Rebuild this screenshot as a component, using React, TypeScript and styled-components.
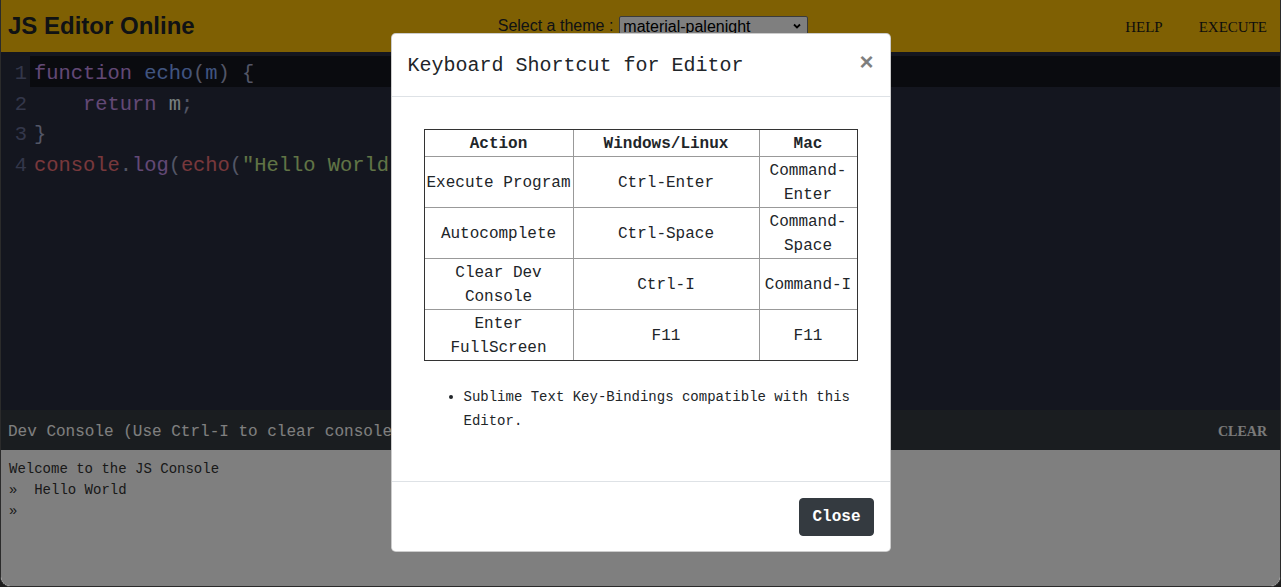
import styled, { createGlobalStyle } from 'styled-components';

const GlobalStyle = createGlobalStyle`
  html, body { margin: 0; padding: 0; background: #1d1d1d; }
  body { font-family: "Liberation Sans", Arial, sans-serif; }
  * { box-sizing: border-box; }
`;

const mono = `"Liberation Mono", "Courier New", monospace`;
const serif = `"Liberation Serif", "Times New Roman", serif`;

const Frame = styled.div`
  position: relative;
  height: 587px;
  display: flex;
  flex-direction: column;
  overflow: hidden;
  border: 1px solid #2b2b2b;
  border-top: none;
  border-radius: 0 0 10px 10px;
  background: #fff;
`;

/* top bar */
const Header = styled.header`
  height: 52px;
  flex: none;
  display: flex;
  align-items: center;
  padding: 0 13px 0 7px;
  background: #ffc107;
`;

const Brand = styled.h1`
  margin: 0;
  font: bold 24px "Liberation Sans", Arial, sans-serif;
  color: #212529;
`;

const ThemePicker = styled.label`
  margin-left: 303px;
  display: flex;
  align-items: center;
  gap: 6px;
  font-size: 16px;
  color: #212529;
`;

const SelectBox = styled.span`
  width: 189px;
  height: 20px;
  display: flex;
  align-items: center;
  padding: 0 6px 0 3px;
  background: #fff;
  border: 1px solid #767676;
  border-radius: 2px;
`;

const Select = styled.select`
  flex: 1;
  appearance: none;
  border: none;
  background: transparent;
  padding: 1px 0 0;
  height: 18px;
  font: 16px "Liberation Sans", Arial, sans-serif;
  color: #000;
  outline: none;
`;

const NavLinks = styled.nav`
  margin-left: auto;
  display: flex;
  gap: 36px;
  padding-top: 2px;
`;

const NavLink = styled.button`
  background: none;
  border: none;
  padding: 0;
  font: 15px ${serif};
  color: #1a1a1a;
`;

/* editor */
const Editor = styled.div`
  height: 358px;
  flex: none;
  padding-top: 4px;
  background: #292d3e;
  font: 20.4px ${mono};
  line-height: 30.6px;
`;

const CodeRow = styled.div`
  display: flex;
  height: 30.6px;
`;

const LineNo = styled.span`
  width: 29px;
  flex: none;
  padding: 3px 3px 0 0;
  text-align: right;
  color: #676e95;
`;

const LineText = styled.span<{ $active?: boolean }>`
  flex: 1;
  padding: 3px 0 0 4px;
  white-space: pre;
  color: #a6accd;
  background: ${(p) => (p.$active ? 'rgba(0, 0, 0, 0.5)' : 'transparent')};
`;

const Tok = styled.span<{ $c: string }>`
  color: ${(p) => p.$c};
`;

/* console */
const DevBar = styled.div`
  height: 40px;
  flex: none;
  display: flex;
  align-items: center;
  justify-content: space-between;
  padding: 4px 13px 0 7px;
  background: #343a40;
  color: #fff;
  font: 16px ${mono};
`;

const ClearButton = styled.button`
  background: none;
  border: none;
  padding: 0;
  font: bold 14px ${serif};
  color: #f2f2f2;
`;

const Console = styled.div`
  flex: 1;
  padding: 9px 8px;
  background: #fff;
  color: #333;
  font: 14px ${mono};
  line-height: 21px;
  white-space: pre;
`;

/* modal */
const Backdrop = styled.div`
  position: absolute;
  inset: 0;
  background: rgba(0, 0, 0, 0.5);
`;

const ModalLayer = styled.div`
  position: absolute;
  inset: 0;
`;

const Dialog = styled.div`
  width: 500px;
  margin: 33px auto 0;
  background: #fff;
  border: 1px solid rgba(0, 0, 0, 0.2);
  border-radius: 4.8px;
  font-family: ${mono};
  color: #212529;
`;

const ModalHeader = styled.div`
  display: flex;
  align-items: flex-start;
  padding: 16px;
  border-bottom: 1px solid #dee2e6;
`;

const ModalTitle = styled.h5`
  margin: 0;
  padding-top: 1px;
  height: 30px;
  font: 20px ${mono};
  line-height: 30px;
`;

const CloseX = styled.button`
  margin: -16px -16px -16px auto;
  padding: 16px;
  background: none;
  border: 0;
  font: bold 24px/1 "Liberation Sans", Arial, sans-serif;
  color: #000;
  opacity: 0.5;
`;

const ModalBody = styled.div`
  padding: 16px;
`;

const ShortcutTable = styled.table`
  width: 434px;
  margin: 16px auto 24px;
  table-layout: fixed;
  border-collapse: separate;
  border-spacing: 0;
  border: 1px solid #333;
  font: 16px ${mono};
  line-height: 24px;

  th, td {
    padding: 2px 1px 0;
    text-align: center;
    border-right: 1px solid #999;
    border-bottom: 1px solid #999;
  }
  th:last-child, td:last-child { border-right: none; }
  tr:last-child td { border-bottom: none; }
  th { font-weight: bold; }
`;

const Col = styled.col<{ $w: number }>`
  width: ${(p) => p.$w}px;
`;

const Notes = styled.ul`
  margin: 0 0 32px 16px;
  padding-left: 40px;
  font: 14px ${mono};
  line-height: 24px;
`;

const ModalFooter = styled.div`
  display: flex;
  justify-content: flex-end;
  padding: 16px 16px 15px;
  border-top: 1px solid #dee2e6;
`;

const DarkButton = styled.button`
  padding: 6px 12px;
  background: #343a40;
  border: 1px solid #343a40;
  border-radius: 4px;
  color: #fff;
  font: bold 16px ${mono};
  line-height: 24px;
`;

const shortcuts = [
  ['Execute Program', 'Ctrl-Enter', 'Command-Enter'],
  ['Autocomplete', 'Ctrl-Space', 'Command-Space'],
  ['Clear Dev Console', 'Ctrl-I', 'Command-I'],
  ['Enter FullScreen', 'F11', 'F11'],
];

const C = {
  kw: '#c792ea',
  def: '#82aaff',
  v2: '#eeffff',
  v: '#f07178',
  str: '#c3e88d',
};

const App = () => {
  return (
    <>
      <GlobalStyle />
      <Frame>
        <Header>
          <Brand>JS Editor Online</Brand>
          <ThemePicker>
            Select a theme :
            <SelectBox>
              <Select defaultValue="material-palenight">
                <option value="material-palenight">material-palenight</option>
              </Select>
              <svg width="8" height="6" viewBox="0 0 8 6">
                <polyline points="1,1.5 4,4.5 7,1.5" fill="none" stroke="#000" strokeWidth="1.8" />
              </svg>
            </SelectBox>
          </ThemePicker>
          <NavLinks>
            <NavLink>HELP</NavLink>
            <NavLink>EXECUTE</NavLink>
          </NavLinks>
        </Header>

        <Editor>
          <CodeRow>
            <LineNo>1</LineNo>
            <LineText $active>
              <Tok $c={C.kw}>function</Tok> <Tok $c={C.def}>echo</Tok>(<Tok $c={C.def}>m</Tok>) {'{'}
            </LineText>
          </CodeRow>
          <CodeRow>
            <LineNo>2</LineNo>
            <LineText>
              {'    '}
              <Tok $c={C.kw}>return</Tok> <Tok $c={C.v2}>m</Tok>;
            </LineText>
          </CodeRow>
          <CodeRow>
            <LineNo>3</LineNo>
            <LineText>{'}'}</LineText>
          </CodeRow>
          <CodeRow>
            <LineNo>4</LineNo>
            <LineText>
              <Tok $c={C.v}>console</Tok>.<Tok $c={C.kw}>log</Tok>(<Tok $c={C.v}>echo</Tok>(
              <Tok $c={C.str}>"Hello World"</Tok>));
            </LineText>
          </CodeRow>
        </Editor>

        <DevBar>
          <span>Dev Console (Use Ctrl-I to clear console)</span>
          <ClearButton>CLEAR</ClearButton>
        </DevBar>
        <Console>
          {'Welcome to the JS Console\n»  Hello World\n»'}
        </Console>

        <Backdrop />
        <ModalLayer>
          <Dialog>
            <ModalHeader>
              <ModalTitle>Keyboard Shortcut for Editor</ModalTitle>
              <CloseX>×</CloseX>
            </ModalHeader>
            <ModalBody>
              <ShortcutTable>
                <colgroup>
                  <Col $w={149} />
                  <Col $w={186} />
                  <Col $w={97} />
                </colgroup>
                <thead>
                  <tr>
                    <th>Action</th>
                    <th>Windows/Linux</th>
                    <th>Mac</th>
                  </tr>
                </thead>
                <tbody>
                  {shortcuts.map((row) => (
                    <tr key={row[0]}>
                      {row.map((cell, i) => (
                        <td key={i}>{cell}</td>
                      ))}
                    </tr>
                  ))}
                </tbody>
              </ShortcutTable>
              <Notes>
                <li>Sublime Text Key-Bindings compatible with this Editor.</li>
              </Notes>
            </ModalBody>
            <ModalFooter>
              <DarkButton>Close</DarkButton>
            </ModalFooter>
          </Dialog>
        </ModalLayer>
      </Frame>
    </>
  );
};

export default App;
